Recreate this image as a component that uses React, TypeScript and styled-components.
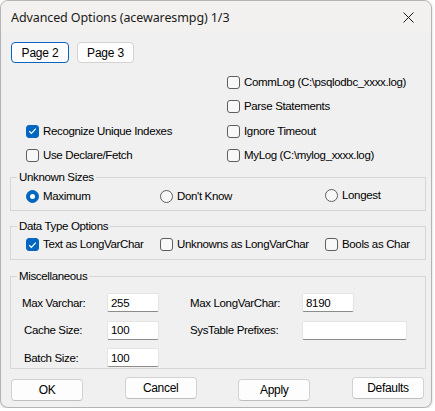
import React from "react";
import styled, { createGlobalStyle } from "styled-components";

const Global = createGlobalStyle`
  html, body { margin: 0; padding: 0; background: #ffffff; }
  body { font-family: "Liberation Sans", Arial, sans-serif; color: #000; }
  * { box-sizing: border-box; }
`;

const Window = styled.div`
  width: 432px;
  height: 408px;
  border: 1px solid #b4b4b4;
  border-radius: 8px;
  overflow: hidden;
  background: #f0f0f0;
  display: flex;
  flex-direction: column;
  box-shadow: 0 1px 3px rgba(0, 0, 0, 0.18);
`;

const TitleBar = styled.div`
  height: 32px;
  flex: none;
  background: #f3f1ef;
  display: flex;
  align-items: center;
  justify-content: space-between;
  padding: 0 17px 0 10px;
`;

const Title = styled.span`
  font-family: "Noto Sans", "Liberation Sans", sans-serif;
  font-size: 12.5px;
  letter-spacing: -0.1px;
  color: #1b1b1b;
`;

const Body = styled.div`
  flex: 1;
  display: flex;
  flex-direction: column;
  padding: 0 5px 0 9px;
`;

const TabRow = styled.div`
  display: flex;
  gap: 8px;
  margin: 9px 0 0 1px;
`;

const TabButton = styled.button<{ $active?: boolean; $w: number }>`
  width: ${(p) => p.$w}px;
  height: 21px;
  padding: 0;
  background: #fdfdfd;
  border: 1px solid ${(p) => (p.$active ? "#0a63bd" : "#d3d3d3")};
  border-radius: 4px;
  font-family: "Liberation Sans", Arial, sans-serif;
  font-size: 12px;
  letter-spacing: -0.2px;
  color: #000;
`;

const OptionGrid = styled.div`
  display: grid;
  grid-template-columns: 201px 1fr;
  grid-auto-rows: 24.5px;
  align-items: center;
  margin-top: 7px;
  padding-left: 16px;
`;

const Empty = styled.span``;

const OptLabel = styled.label`
  display: flex;
  align-items: center;
  gap: 4px;
  font-size: 11.5px;
  letter-spacing: -0.35px;
  white-space: nowrap;
  line-height: 13px;
`;

const Box = styled.span<{ $on?: boolean }>`
  width: 13px;
  height: 13px;
  flex: none;
  border-radius: 3px;
  border: 1px solid ${(p) => (p.$on ? "#0067c0" : "#5e5e5e")};
  background: ${(p) => (p.$on ? "#0067c0" : "#f8f8f8")};
  display: flex;
  align-items: center;
  justify-content: center;
`;

const Radio = styled.span<{ $on?: boolean }>`
  width: 13px;
  height: 13px;
  flex: none;
  border-radius: 50%;
  border: 1px solid ${(p) => (p.$on ? "#0067c0" : "#5e5e5e")};
  background: ${(p) => (p.$on ? "#0067c0" : "#f8f8f8")};
  display: flex;
  align-items: center;
  justify-content: center;
  &::after {
    content: "";
    display: ${(p) => (p.$on ? "block" : "none")};
    width: 5px;
    height: 5px;
    border-radius: 50%;
    background: #fff;
  }
`;

const Group = styled.fieldset<{ $mt: number; $pt: number; $pb: number }>`
  margin: ${(p) => p.$mt}px 0 0 0;
  padding: ${(p) => p.$pt}px 0 ${(p) => p.$pb}px 6px;
  border: 1px solid #d6d6d6;
  border-radius: 0;
  min-width: 0;
`;

const Legend = styled.legend`
  padding: 0 2px;
  font-size: 11.5px;
  letter-spacing: -0.35px;
  line-height: 14px;
`;

const ChoiceRow = styled.div`
  display: grid;
  grid-template-columns: 134px 165px 1fr;
  height: 13px;
  align-items: center;
  padding-left: 9px;
`;

const Lifted = styled.div<{ $lift: number }>`
  margin-top: -${(p) => p.$lift}px;
`;

const MiscGrid = styled.div`
  display: grid;
  grid-template-columns: 85px 52px 31px 112px 105px;
  grid-auto-rows: 19px;
  row-gap: 8.5px;
  align-items: center;
  padding-left: 5px;
`;

const FieldLabel = styled.span<{ $indent?: number }>`
  font-size: 11.5px;
  letter-spacing: -0.35px;
  padding-left: ${(p) => p.$indent ?? 0}px;
  white-space: nowrap;
`;

const Field = styled.input<{ $w: number }>`
  width: ${(p) => p.$w}px;
  height: 19px;
  padding: 0 3px;
  background: #ffffff;
  border: 1px solid #e4e4e4;
  border-bottom-color: #8c8c8c;
  border-radius: 2px;
  font-family: "Liberation Sans", Arial, sans-serif;
  font-size: 11.5px;
  letter-spacing: -0.3px;
  color: #000;
  outline: none;
`;

const ButtonRow = styled.div`
  display: flex;
  justify-content: space-between;
  align-items: flex-start;
  margin-top: 8px;
  padding: 0 2px 0 1px;
`;

const DlgButton = styled.button<{ $drop?: number }>`
  width: 72px;
  height: 22px;
  margin-top: ${(p) => p.$drop ?? 0}px;
  padding: 0;
  background: #fdfdfd;
  border: 1px solid #d2d2d2;
  border-bottom-color: #bdbdbd;
  border-radius: 4px;
  font-family: "Liberation Sans", Arial, sans-serif;
  font-size: 12px;
  letter-spacing: -0.3px;
  color: #000;
`;

const Check = ({ on, children }: { on?: boolean; children: React.ReactNode }) => (
  <OptLabel>
    <Box $on={on}>
      {on && (
        <svg width="9" height="8" viewBox="0 0 9 8">
          <path d="M1.2 4.2 L3.4 6.3 L7.8 1.6" fill="none" stroke="#fff" strokeWidth="1.2" />
        </svg>
      )}
    </Box>
    {children}
  </OptLabel>
);

const Choice = ({ on, children }: { on?: boolean; children: React.ReactNode }) => (
  <OptLabel>
    <Radio $on={on} />
    {children}
  </OptLabel>
);

export default function App() {
  return (
    <>
      <Global />
      <Window>
        <TitleBar>
          <Title>Advanced Options (acewaresmpg) 1/3</Title>
          <svg width="11" height="11" viewBox="0 0 11 11">
            <path d="M0.5 0.5 L10.5 10.5 M10.5 0.5 L0.5 10.5" stroke="#1b1b1b" strokeWidth="1" />
          </svg>
        </TitleBar>
        <Body>
          <TabRow>
            <TabButton $active $w={58}>Page 2</TabButton>
            <TabButton $w={57}>Page 3</TabButton>
          </TabRow>

          <OptionGrid>
            <Empty />
            <Check>CommLog (C:\psqlodbc_xxxx.log)</Check>
            <Empty />
            <Check>Parse Statements</Check>
            <Check on>Recognize Unique Indexes</Check>
            <Check>Ignore Timeout</Check>
            <Check>Use Declare/Fetch</Check>
            <Check>MyLog (C:\mylog_xxxx.log)</Check>
          </OptionGrid>

          <Group $mt={2} $pt={6} $pb={7}>
            <Legend>Unknown Sizes</Legend>
            <ChoiceRow>
              <Choice on>Maximum</Choice>
              <Choice>Don't Know</Choice>
              <Lifted $lift={2}>
                <Choice>Longest</Choice>
              </Lifted>
            </ChoiceRow>
          </Group>

          <Group $mt={8} $pt={5} $pb={8}>
            <Legend>Data Type Options</Legend>
            <ChoiceRow>
              <Check on>Text as LongVarChar</Check>
              <Check>Unknowns as LongVarChar</Check>
              <Check>Bools as Char</Check>
            </ChoiceRow>
          </Group>

          <Group $mt={9} $pt={10} $pb={1}>
            <Legend>Miscellaneous</Legend>
            <MiscGrid>
              <FieldLabel>Max Varchar:</FieldLabel>
              <Field $w={52} readOnly value="255" />
              <Empty />
              <FieldLabel>Max LongVarChar:</FieldLabel>
              <Field $w={52} readOnly value="8190" />

              <FieldLabel $indent={2}>Cache Size:</FieldLabel>
              <Field $w={52} readOnly value="100" />
              <Empty />
              <FieldLabel>SysTable Prefixes:</FieldLabel>
              <Field $w={105} readOnly value="" />

              <FieldLabel $indent={2}>Batch Size:</FieldLabel>
              <Field $w={52} readOnly value="100" />
            </MiscGrid>
          </Group>

          <ButtonRow>
            <DlgButton $drop={2}>OK</DlgButton>
            <DlgButton>Cancel</DlgButton>
            <DlgButton $drop={2}>Apply</DlgButton>
            <DlgButton>Defaults</DlgButton>
          </ButtonRow>
        </Body>
      </Window>
    </>
  );
}
